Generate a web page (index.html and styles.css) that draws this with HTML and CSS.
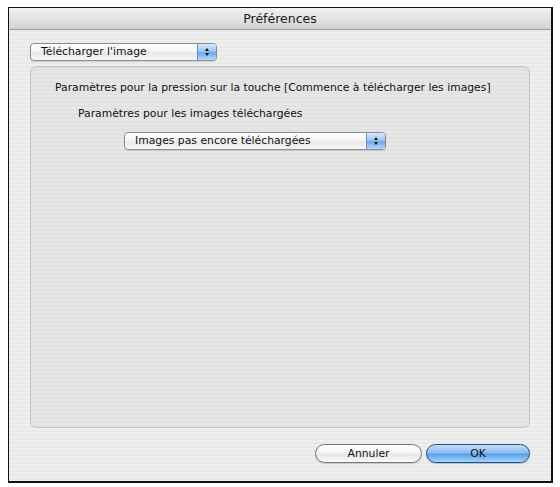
FILE: index.html
```html
<!DOCTYPE html>
<html lang="fr">
<head>
<meta charset="utf-8">
<title>Préférences</title>
<link rel="stylesheet" href="styles.css">
</head>
<body>
<div class="window">
  <div class="titlebar">Préférences</div>
  <div class="content">
    <div class="popup popup-main">
      <span class="popup-label">Télécharger l'image</span>
      <span class="popup-arrows"><span class="arr-up"></span><span class="arr-down"></span></span>
    </div>
    <div class="group">
      <p class="line1">Paramètres pour la pression sur la touche [Commence à télécharger les images]</p>
      <p class="line2">Paramètres pour les images téléchargées</p>
      <div class="popup popup-sub">
        <span class="popup-label">Images pas encore téléchargées</span>
        <span class="popup-arrows"><span class="arr-up"></span><span class="arr-down"></span></span>
      </div>
    </div>
    <div class="buttons">
      <button class="btn btn-cancel">Annuler</button>
      <button class="btn btn-ok">OK</button>
    </div>
  </div>
</div>
</body>
</html>
```
FILE: styles.css
```css
html, body {
  margin: 0;
  padding: 0;
  background: #ffffff;
}
body {
  font-family: "DejaVu Sans", "Liberation Sans", sans-serif;
  font-size: 10.8px;
  color: #111;
}
.window {
  box-sizing: border-box;
  width: 545px;
  height: 476px;
  margin: 7px 0 0 8px;
  border: 1px solid #111;
  border-right-width: 2px;
  border-bottom-width: 2px;
  background: repeating-linear-gradient(to bottom, #eeeeee 0, #eeeeee 2px, #e9e9e9 2px, #e9e9e9 4px);
  display: flex;
  flex-direction: column;
}
.titlebar {
  height: 22px;
  box-sizing: border-box;
  border-bottom: 1px solid #9c9c9c;
  background: linear-gradient(to bottom, #f2f2f2 0%, #e3e3e3 50%, #d2d2d2 100%);
  text-align: center;
  font-size: 12.5px;
  line-height: 21px;
  color: #1a1a1a;
}
.content {
  flex: 1;
  display: flex;
  flex-direction: column;
  padding: 13px 21px 0 21px;
}
.popup {
  box-sizing: border-box;
  height: 18px;
  display: flex;
  align-items: stretch;
  border: 1px solid #8d8d8d;
  border-radius: 4px;
  background: linear-gradient(to bottom, #ffffff 0%, #f6f6f6 45%, #e8e8e8 55%, #f7f7f7 100%);
  box-shadow: 0 1px 1px rgba(0,0,0,0.12);
  overflow: hidden;
}
.popup-label {
  flex: 1;
  padding-left: 10px;
  line-height: 16px;
}
.popup-arrows {
  width: 18px;
  border-left: 1px solid #6a8fc4;
  background: linear-gradient(to bottom, #d8eafd 0%, #9cc5f3 45%, #6ea8ec 55%, #b5dafc 100%);
  display: flex;
  flex-direction: column;
  align-items: center;
  justify-content: center;
  gap: 2px;
}
.arr-up {
  width: 0; height: 0;
  border-left: 2.5px solid transparent;
  border-right: 2.5px solid transparent;
  border-bottom: 3px solid #111;
}
.arr-down {
  width: 0; height: 0;
  border-left: 2.5px solid transparent;
  border-right: 2.5px solid transparent;
  border-top: 3px solid #111;
}
.popup-main {
  width: 187px;
}
.group {
  box-sizing: border-box;
  margin-top: 5px;
  width: 500px;
  height: 362px;
  border: 1px solid #c6c6c6;
  border-radius: 6px;
  background: repeating-linear-gradient(to bottom, #e6e6e6 0, #e6e6e6 2px, #e2e2e2 2px, #e2e2e2 4px);
  box-shadow: inset 0 1px 2px rgba(0,0,0,0.06);
  padding: 14px 0 0 24px;
}
.group p {
  margin: 0;
  line-height: 13px;
}
.line2 {
  margin-top: 13px !important;
  padding-left: 23px;
}
.popup-sub {
  margin-top: 12px;
  margin-left: 69px;
  width: 262px;
}
.buttons {
  display: flex;
  justify-content: flex-end;
  gap: 4px;
  margin-top: 16px;
  width: 500px;
}
.btn {
  box-sizing: border-box;
  height: 19px;
  border-radius: 10px;
  font-family: inherit;
  font-size: 10.8px;
  padding: 0;
  line-height: 17px;
  color: #111;
}
.btn-cancel {
  width: 107px;
  border: 1px solid #777;
  background: linear-gradient(to bottom, #ffffff 0%, #f4f4f4 45%, #e6e6e6 55%, #fafafa 100%);
  box-shadow: 0 1px 1px rgba(0,0,0,0.15);
}
.btn-ok {
  width: 104px;
  border: 1px solid #23508f;
  background: linear-gradient(to bottom, #c4ddf8 0%, #8cbdf2 45%, #5b9fe9 55%, #a2d8fc 100%);
  box-shadow: 0 1px 1px rgba(0,0,0,0.2);
}
```
